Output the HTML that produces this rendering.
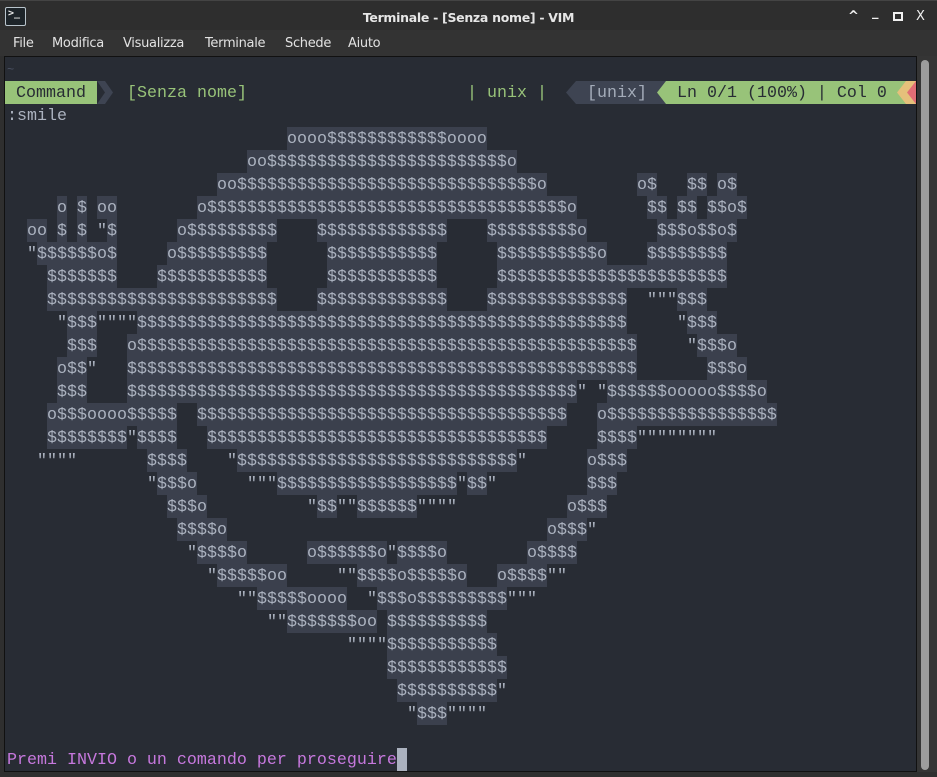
<!DOCTYPE html>
<html><head><meta charset="utf-8"><style>
*{margin:0;padding:0;box-sizing:border-box}
body{width:937px;height:777px;background:#2f2f2f;overflow:hidden;position:relative;font-family:"Liberation Sans","DejaVu Sans",sans-serif}
#title{position:absolute;left:0;top:0;width:937px;height:30px;background:#2e2e2e;border-top:1px solid #444}
#title .t{position:absolute;left:0;width:937px;top:9px;text-align:center;color:#e6e6e6;font-weight:bold;font-size:12.5px;font-family:"DejaVu Sans","Liberation Sans",sans-serif;letter-spacing:-0.3px}
#icon{position:absolute;left:5px;top:6px;width:21px;height:19px;border:1px solid #b8c4cc;border-radius:2px;background:#1d2429;color:#e8e8e8;font:bold 10px "DejaVu Sans Mono",monospace;line-height:12px;padding-left:2px}
.wc{position:absolute;top:6px;color:#f0f0f0;font:bold 13px "DejaVu Sans",sans-serif}
#menu{position:absolute;left:0;top:30px;width:937px;height:26px;background:#333}
#menu span{position:absolute;top:6px;color:#e2e2e2;font-size:13px;font-family:"DejaVu Sans","Liberation Sans",sans-serif;letter-spacing:-0.3px}
#term{position:absolute;left:4px;top:56px;width:913px;height:716px;background:#282c34;border:1px solid #111}
#sb{position:absolute;left:917px;top:56px;width:20px;height:716px;background:#353535}
#sb div{position:absolute;left:4px;top:4px;width:8px;height:710px;background:#9c9c9c;border-radius:4px}
.r{position:absolute;left:0;height:23px;line-height:23px;font-family:"Liberation Mono","DejaVu Sans Mono",monospace;font-size:16.667px;color:#abb2bf;white-space:pre;margin-top:1px}
.r span{position:absolute;top:0;height:23px;padding-top:1px;line-height:23px;left:calc(7px + var(--c)*10px)}
.r span.h{background:#3b404d}
.g{color:#98c379}
</style></head><body>
<div id="title"><div id="icon">&gt;_</div><div class="t">Terminale - [Senza nome] - VIM</div>
<span class="wc" style="left:848px;top:8px">^</span><span class="wc" style="left:872px;top:4px">_</span>
<span class="wc" style="left:893px;top:11px;width:10px;height:9px;border:2px solid #f0f0f0"></span><span class="wc" style="left:916px;top:8px;font-weight:normal">X</span></div>
<div id="menu"><span style="left:13px">File</span><span style="left:52px">Modifica</span><span style="left:123px">Visualizza</span><span style="left:205px">Terminale</span><span style="left:285px">Schede</span><span style="left:348px">Aiuto</span></div>
<div id="term"></div>
<div id="sb"><div></div></div>

<div class="r" style="top:57px;color:#4b5263;font-size:12px"><span style="--c:0">~</span></div>

<!-- statusline -->
<div style="position:absolute;left:5px;top:81px;width:92px;height:23px;background:#98c379"></div>
<svg style="position:absolute;left:97px;top:81px" width="16" height="23"><polygon points="0,0 8,0 16,11.5 8,23 0,23 8,11.5" fill="#3e4452"/></svg>
<div style="position:absolute;left:576px;top:81px;width:90px;height:23px;background:#3e4452"></div>
<svg style="position:absolute;left:566px;top:81px" width="10" height="23"><polygon points="10,0 10,23 0,11.5" fill="#3e4452"/></svg>
<div style="position:absolute;left:666px;top:81px;width:240px;height:23px;background:#98c379"></div>
<svg style="position:absolute;left:657px;top:81px" width="9" height="23"><polygon points="9,0 9,23 0,11.5" fill="#98c379"/></svg>
<div style="position:absolute;left:906px;top:81px;width:10px;height:23px;background:#e5c07b"></div>
<svg style="position:absolute;left:897px;top:81px" width="19" height="23"><polygon points="9,0 9,23 0,11.5" fill="#e5c07b"/><polygon points="19,0 19,23 10,11.5" fill="#e06c75"/></svg>
<div class="r" style="top:80px"><span style="left:16px;color:#282c34">Command</span><span class="g" style="left:127px">[Senza nome]</span><span class="g" style="left:467px">| unix |</span><span style="left:587px;color:#a4acb9">[unix]</span><span style="left:677px;color:#282c34">Ln 0/1 (100%) | Col 0</span></div>
<div class="r" style="top:103px"><span style="--c:0">:smile</span></div>

<div class="r" style="top:126px"><span class="h" style="--c:28">oooo$$$$$$$$$$$$oooo</span></div>
<div class="r" style="top:149px"><span class="h" style="--c:24">oo$$$$$$$$$$$$$$$$$$$$$$$$o</span></div>
<div class="r" style="top:172px"><span class="h" style="--c:21">oo$$$$$$$$$$$$$$$$$$$$$$$$$$$$$$o</span><span class="h" style="--c:63">o$</span><span class="h" style="--c:68">$$</span><span class="h" style="--c:71">o$</span></div>
<div class="r" style="top:195px"><span class="h" style="--c:5">o</span><span class="h" style="--c:7">$</span><span class="h" style="--c:9">oo</span><span class="h" style="--c:19">o$$$$$$$$$$$$$$$$$$$$$$$$$$$$$$$$$$$$o</span><span class="h" style="--c:64">$$</span><span class="h" style="--c:67">$$</span><span class="h" style="--c:70">$$o$</span></div>
<div class="r" style="top:218px"><span class="h" style="--c:2">oo</span><span class="h" style="--c:5">$</span><span class="h" style="--c:7">$</span><span style="--c:9">"</span><span class="h" style="--c:10">$</span><span class="h" style="--c:17">o$$$$$$$$$</span><span class="h" style="--c:31">$$$$$$$$$$$$$</span><span class="h" style="--c:48">$$$$$$$$$o</span><span class="h" style="--c:65">$$$o$$o$</span></div>
<div class="r" style="top:241px"><span style="--c:2">"</span><span class="h" style="--c:3">$$$$$$o$</span><span class="h" style="--c:16">o$$$$$$$$$</span><span class="h" style="--c:32">$$$$$$$$$$$</span><span class="h" style="--c:49">$$$$$$$$$$o</span><span class="h" style="--c:64">$$$$$$$$</span></div>
<div class="r" style="top:264px"><span class="h" style="--c:4">$$$$$$$</span><span class="h" style="--c:15">$$$$$$$$$$$</span><span class="h" style="--c:32">$$$$$$$$$$$</span><span class="h" style="--c:49">$$$$$$$$$$$$$$$$$$$$$$$</span></div>
<div class="r" style="top:287px"><span class="h" style="--c:4">$$$$$$$$$$$$$$$$$$$$$$$</span><span class="h" style="--c:31">$$$$$$$$$$$$$</span><span class="h" style="--c:48">$$$$$$$$$$$$$$</span><span style="--c:64">"""</span><span class="h" style="--c:67">$$$</span></div>
<div class="r" style="top:310px"><span style="--c:5">"</span><span class="h" style="--c:6">$$$</span><span style="--c:9">""""</span><span class="h" style="--c:13">$$$$$$$$$$$$$$$$$$$$$$$$$$$$$$$$$$$$$$$$$$$$$$$$$</span><span style="--c:67">"</span><span class="h" style="--c:68">$$$</span></div>
<div class="r" style="top:333px"><span class="h" style="--c:6">$$$</span><span class="h" style="--c:12">o$$$$$$$$$$$$$$$$$$$$$$$$$$$$$$$$$$$$$$$$$$$$$$$$$$</span><span style="--c:68">"</span><span class="h" style="--c:69">$$$o</span></div>
<div class="r" style="top:356px"><span class="h" style="--c:5">o$$</span><span style="--c:8">"</span><span class="h" style="--c:12">$$$$$$$$$$$$$$$$$$$$$$$$$$$$$$$$$$$$$$$$$$$$$$$$$$$</span><span class="h" style="--c:70">$$$o</span></div>
<div class="r" style="top:379px"><span class="h" style="--c:5">$$$</span><span class="h" style="--c:12">$$$$$$$$$$$$$$$$$$$$$$$$$$$$$$$$$$$$$$$$$$$$$</span><span style="--c:57">"</span><span style="--c:59">"</span><span class="h" style="--c:60">$$$$$$ooooo$$$$o</span></div>
<div class="r" style="top:402px"><span class="h" style="--c:4">o$$$oooo$$$$$</span><span class="h" style="--c:19">$$$$$$$$$$$$$$$$$$$$$$$$$$$$$$$$$$$$$</span><span class="h" style="--c:59">o$$$$$$$$$$$$$$$$$</span></div>
<div class="r" style="top:425px"><span class="h" style="--c:4">$$$$$$$$</span><span style="--c:12">"</span><span class="h" style="--c:13">$$$$</span><span class="h" style="--c:20">$$$$$$$$$$$$$$$$$$$$$$$$$$$$$$$$$$</span><span class="h" style="--c:59">$$$$</span><span style="--c:63">""""""""</span></div>
<div class="r" style="top:448px"><span style="--c:3">""""</span><span class="h" style="--c:14">$$$$</span><span style="--c:22">"</span><span class="h" style="--c:23">$$$$$$$$$$$$$$$$$$$$$$$$$$$$</span><span style="--c:51">"</span><span class="h" style="--c:58">o$$$</span></div>
<div class="r" style="top:471px"><span style="--c:14">"</span><span class="h" style="--c:15">$$$o</span><span style="--c:24">"""</span><span class="h" style="--c:27">$$$$$$$$$$$$$$$$$$</span><span style="--c:45">"</span><span class="h" style="--c:46">$$</span><span style="--c:48">"</span><span class="h" style="--c:58">$$$</span></div>
<div class="r" style="top:494px"><span class="h" style="--c:16">$$$o</span><span style="--c:30">"</span><span class="h" style="--c:31">$$</span><span style="--c:33">""</span><span class="h" style="--c:35">$$$$$$</span><span style="--c:41">""""</span><span class="h" style="--c:56">o$$$</span></div>
<div class="r" style="top:517px"><span class="h" style="--c:17">$$$$o</span><span class="h" style="--c:54">o$$$</span><span style="--c:58">"</span></div>
<div class="r" style="top:540px"><span style="--c:18">"</span><span class="h" style="--c:19">$$$$o</span><span class="h" style="--c:30">o$$$$$$o</span><span style="--c:38">"</span><span class="h" style="--c:39">$$$$o</span><span class="h" style="--c:52">o$$$$</span></div>
<div class="r" style="top:563px"><span style="--c:20">"</span><span class="h" style="--c:21">$$$$$oo</span><span style="--c:33">""</span><span class="h" style="--c:35">$$$$o$$$$$o</span><span class="h" style="--c:49">o$$$$</span><span style="--c:54">""</span></div>
<div class="r" style="top:586px"><span style="--c:23">""</span><span class="h" style="--c:25">$$$$$oooo</span><span style="--c:36">"</span><span class="h" style="--c:37">$$$o$$$$$$$$$</span><span style="--c:50">"""</span></div>
<div class="r" style="top:609px"><span style="--c:26">""</span><span class="h" style="--c:28">$$$$$$$oo</span><span class="h" style="--c:38">$$$$$$$$$$</span></div>
<div class="r" style="top:632px"><span style="--c:34">""""</span><span class="h" style="--c:38">$$$$$$$$$$$</span></div>
<div class="r" style="top:655px"><span class="h" style="--c:38">$$$$$$$$$$$$</span></div>
<div class="r" style="top:678px"><span class="h" style="--c:39">$$$$$$$$$$</span><span style="--c:49">"</span></div>
<div class="r" style="top:701px"><span style="--c:40">"</span><span class="h" style="--c:41">$$$</span><span style="--c:44">""""</span></div>

<div class="r" style="top:747px"><span style="--c:0;color:#c678dd">Premi INVIO o un comando per proseguire</span><span style="--c:39;width:10px;height:23px;background:#abb2bf"></span></div>
</body></html>
